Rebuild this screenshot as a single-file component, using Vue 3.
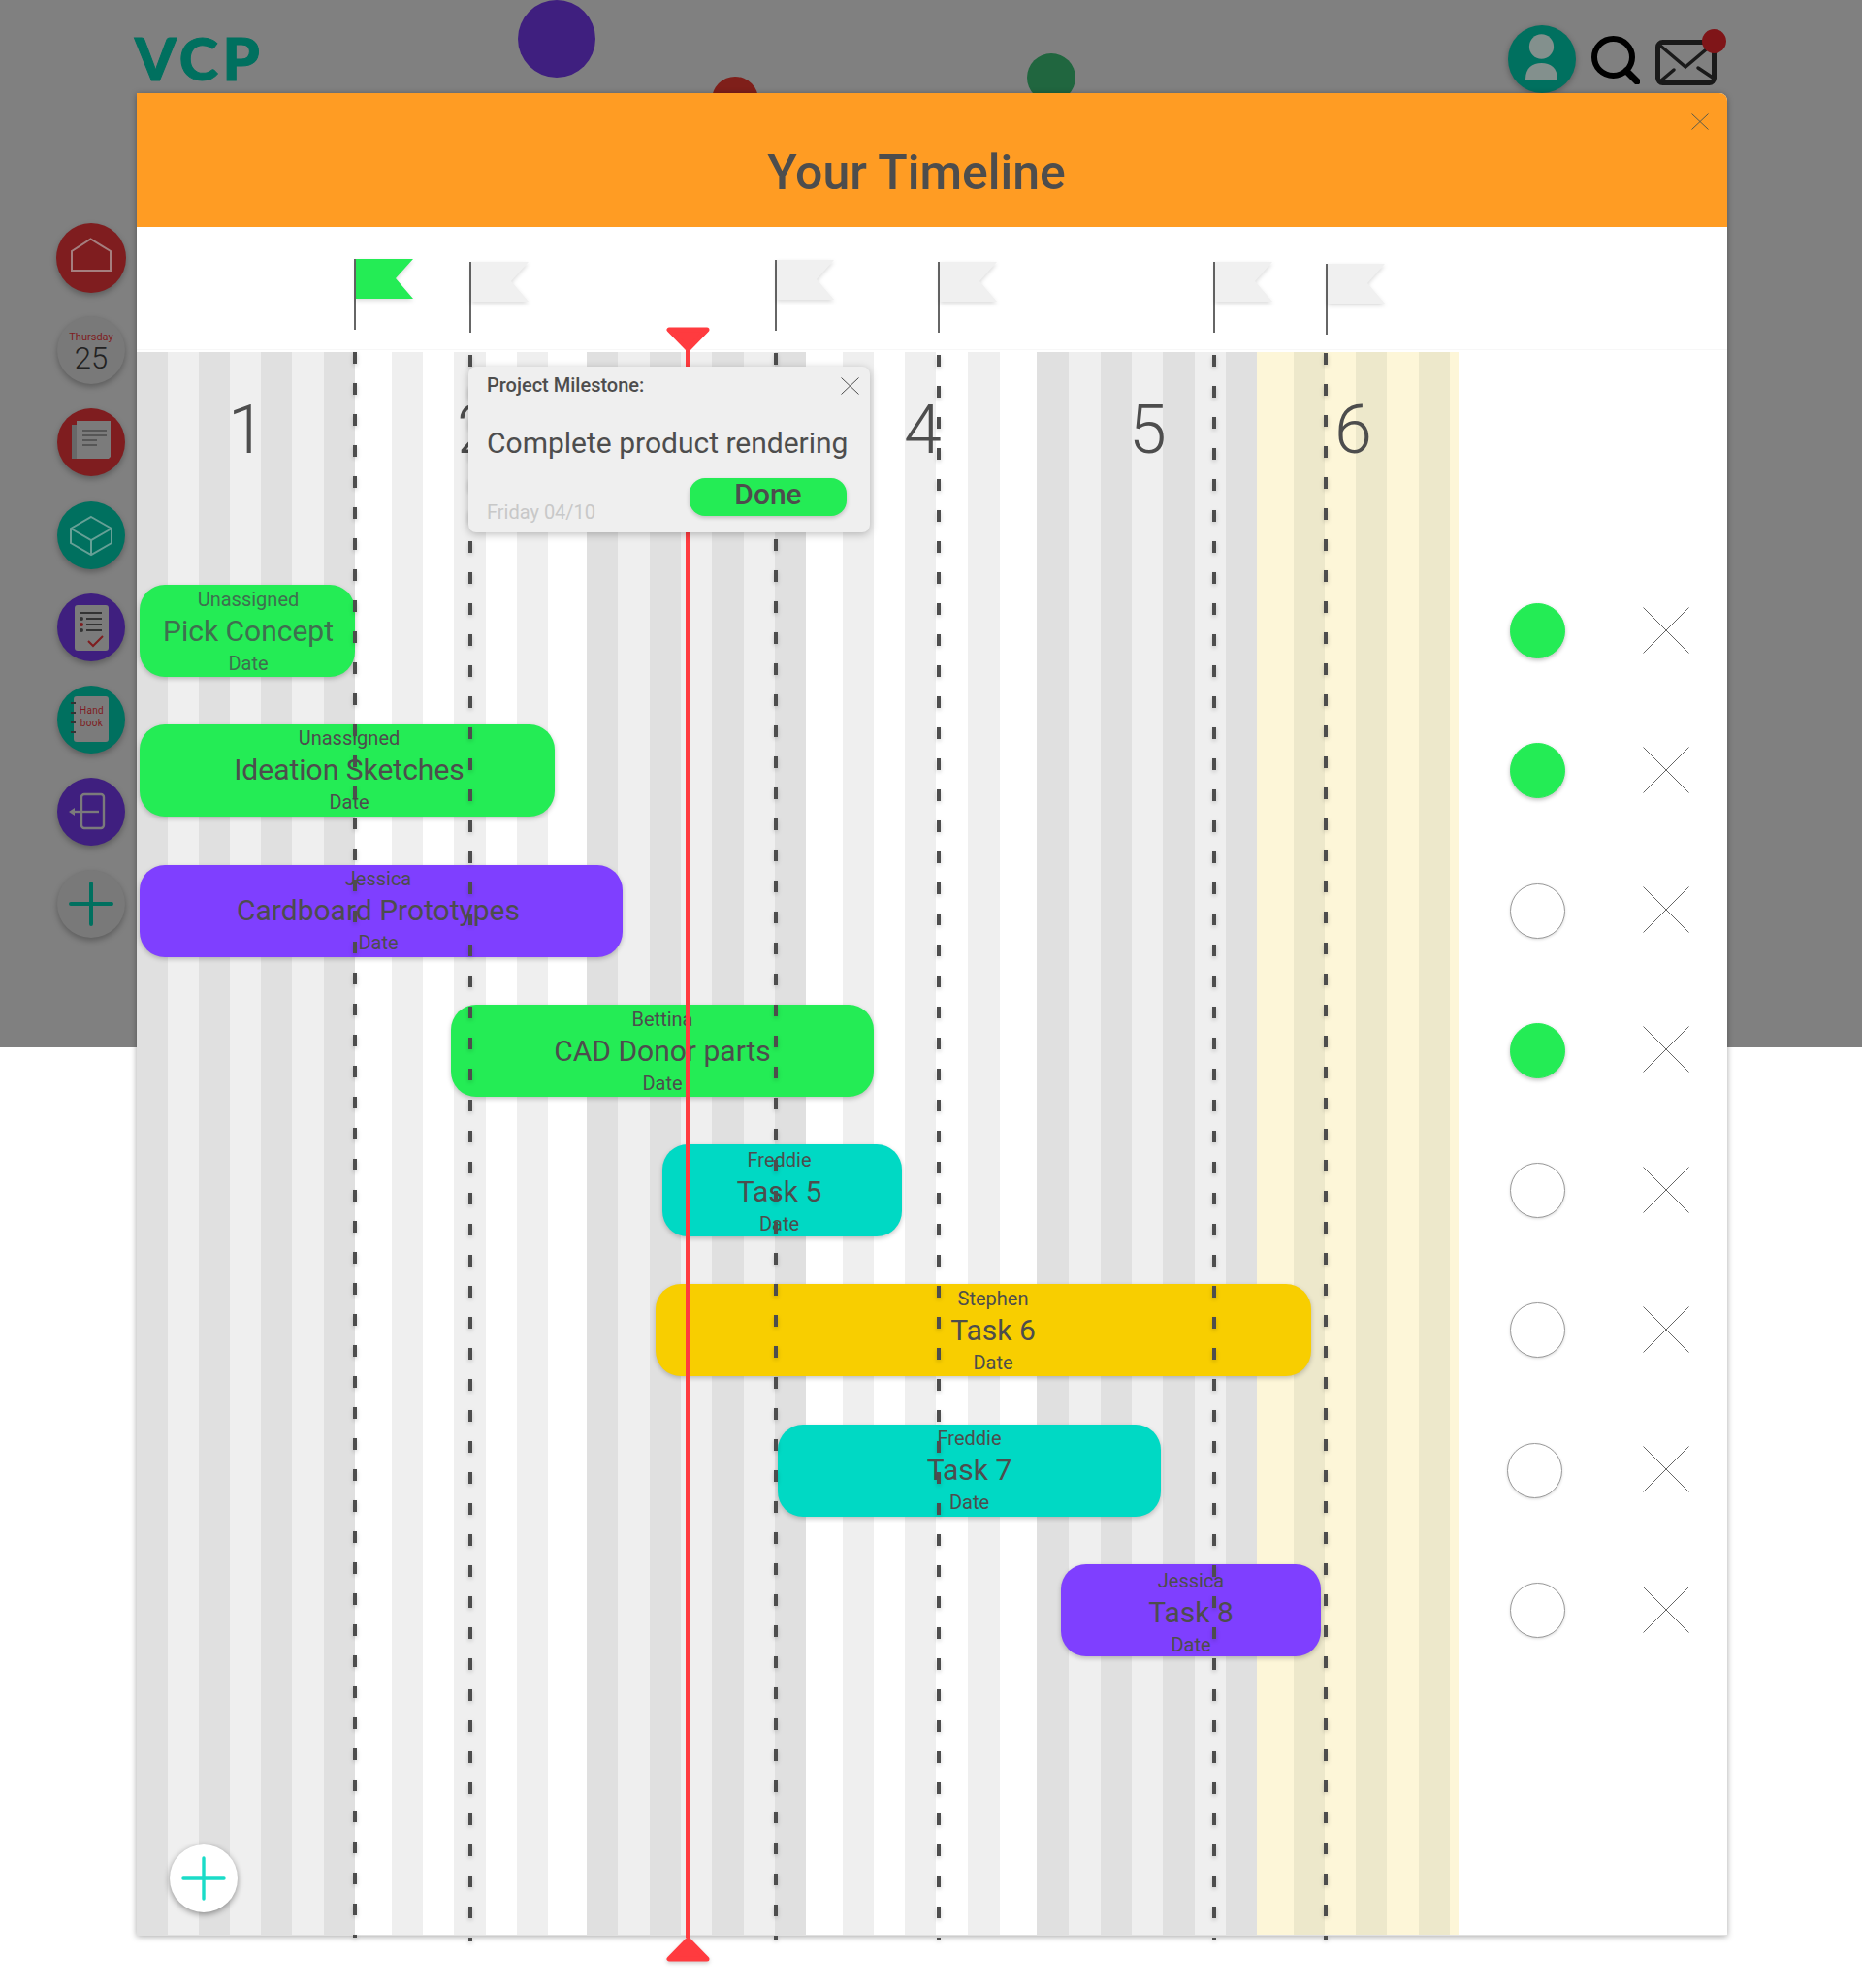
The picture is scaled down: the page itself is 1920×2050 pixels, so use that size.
<script setup>
const bounds = [
  [173,'d'],[205,'l'],[237,'d'],[269,'l'],[301,'d'],[334,'l'],[366,'d'],
  [404,'w'],[436,'l'],[468,'w'],[500.5,'l'],[533,'w'],[565,'l'],
  [604.5,'w'],[637,'d'],[670,'l'],[702,'d'],[734,'l'],[766.5,'d'],[799,'l'],[831,'d'],
  [869,'w'],[901,'l'],[933,'w'],[965,'l'],[998,'w'],[1030.5,'l'],
  [1069,'w'],[1102,'d'],[1135,'l'],[1167,'d'],[1199,'l'],[1231.5,'d'],[1264,'l'],[1296,'d'],
  [1334,'y'],[1366,'z'],[1398,'y'],[1430,'z'],[1463,'y'],[1495,'z'],[1504,'y']
]
const colors = { d:'#e0e0e0', l:'#efefef', w:'#ffffff', y:'#fdf6d8', z:'#ede8cb' }
let prev = 141
const stripes = bounds.map(([end, k]) => {
  const s = { width: end - prev, color: colors[k] }
  prev = end
  return s
})

const weeks = [
  { n: 1, left: 94 }, { n: 2, left: 330 }, { n: 3, left: 560 },
  { n: 4, left: 791 }, { n: 5, left: 1023 }, { n: 6, left: 1235 }
]

const flags = [
  { pole: 365.5, top: 267, on: true },
  { pole: 485, top: 270 },
  { pole: 800, top: 268 },
  { pole: 968, top: 270 },
  { pole: 1252, top: 270 },
  { pole: 1368, top: 272 }
]

const dashes = [
  { x: 366, top: 363, end: 1998 },
  { x: 485, top: 366, end: 2002 },
  { x: 800, top: 364, end: 2000 },
  { x: 968, top: 366, end: 2000 },
  { x: 1252, top: 366, end: 2000 },
  { x: 1367, top: 364, end: 2000 }
]

const tasks = [
  { who: 'Unassigned', name: 'Pick Concept', x: 144, end: 366, tone: 'green', shift: 1, dy: 1, done: true, soft: true },
  { who: 'Unassigned', name: 'Ideation Sketches', x: 144, end: 572, tone: 'green', shift: 2, dy: 0, done: true },
  { who: 'Jessica', name: 'Cardboard Prototypes', x: 144, end: 642, tone: 'purple', shift: -3, dy: 0, done: false },
  { who: 'Bettina', name: 'CAD Donor parts', x: 465, end: 901, tone: 'green', shift: 0, dy: 1, done: true },
  { who: 'Freddie', name: 'Task 5', x: 683, end: 930, tone: 'teal', shift: -3, dy: 2, done: false },
  { who: 'Stephen', name: 'Task 6', x: 676, end: 1352, tone: 'yellow', shift: 10, dy: 1, done: false },
  { who: 'Freddie', name: 'Task 7', x: 802, end: 1197, tone: 'teal', shift: 0, dy: 0, done: false, dot: -3 },
  { who: 'Jessica', name: 'Task 8', x: 1094, end: 1362, tone: 'purple', shift: 0, dy: 3, done: false }
]
</script>

<template>
  <div class="page">
    <div class="backdrop">
      <span class="blob blob-purple"></span>
      <span class="blob blob-red"></span>
      <span class="blob blob-green"></span>

      <header class="topbar">
        <div class="logo">VCP</div>
        <div class="top-icons">
          <div class="user">
            <svg width="70" height="70" viewBox="0 0 70 70">
              <ellipse cx="34.5" cy="22" rx="12.6" ry="12.7" fill="#83908d" />
              <path d="M18 56 C18 44 25 39 34.5 39 C44 39 51 44 51 56 Z" fill="#83908d" />
            </svg>
          </div>
          <svg class="search" width="50" height="50" viewBox="0 0 50 50">
            <ellipse cx="22.5" cy="22" rx="19.5" ry="19" fill="none" stroke="#000" stroke-width="6" />
            <path d="M36 36 L47 47" stroke="#000" stroke-width="7" stroke-linecap="round" />
          </svg>
          <div class="mail">
            <svg width="63" height="47" viewBox="0 0 63 47">
              <rect x="2.5" y="2.5" width="58" height="42" rx="5" fill="none" stroke="#1a1a1a" stroke-width="5" />
              <path d="M5 6 L31 28 L57 6" fill="none" stroke="#1a1a1a" stroke-width="3.5" />
              <path d="M6 42 L19 31 M44 29 L59 39" stroke="#1a1a1a" stroke-width="3.5" stroke-linecap="round" />
            </svg>
            <span class="mail-dot"></span>
          </div>
        </div>
      </header>

      <nav class="sidebar">
        <div class="nav nav-home red">
          <svg width="72" height="72" viewBox="0 0 72 72">
            <path d="M16 49 V29 L35.5 16.5 L56 29 V49 Z" fill="none" stroke="#a57f7f" stroke-width="2" />
          </svg>
        </div>
        <div class="nav grey cal">
          <span class="cal-day">Thursday</span>
          <span class="cal-num">25</span>
        </div>
        <div class="nav red">
          <svg width="70" height="70" viewBox="0 0 70 70">
            <rect x="15" y="17" width="10" height="35" fill="#686868" />
            <path d="M20 13 H55 V50 L53 52 H20 Z" fill="#7b7b7b" />
            <path d="M26 23 H51 M26 28 H51 M26 33 H41 M26 38 H41" stroke="#333" stroke-width="1" />
          </svg>
        </div>
        <div class="nav teal">
          <svg width="70" height="70" viewBox="0 0 70 70">
            <path d="M35 16 L56 28 V43 L35 55 L14 43 V28 Z M14 28 L35 40 L56 28 M35 40 V55" fill="none" stroke="#66a096" stroke-width="2" />
          </svg>
        </div>
        <div class="nav purple">
          <svg width="70" height="70" viewBox="0 0 70 70">
            <rect x="18" y="12" width="35" height="47" rx="3" fill="#7b7b7b" />
            <path d="M23 20 H46" stroke="#333" stroke-width="2" />
            <path d="M30 26 H46 M30 32 H46 M30 38 H46" stroke="#333" stroke-width="2" />
            <circle cx="25" cy="26" r="2" fill="#333" />
            <circle cx="25" cy="32" r="2" fill="#7f1d1f" />
            <circle cx="25" cy="38" r="2" fill="#333" />
            <path d="M32 49 L37 54 L47 44" fill="none" stroke="#7f1d1f" stroke-width="2" />
          </svg>
        </div>
        <div class="nav teal book">
          <div class="book-page">
            <span class="ring"></span><span class="ring"></span><span class="ring"></span><span class="ring"></span>
            <span class="book-text">Hand<br />book</span>
          </div>
        </div>
        <div class="nav purple">
          <svg width="70" height="70" viewBox="0 0 70 70">
            <rect x="25" y="17" width="23" height="35" rx="3" fill="none" stroke="#7b7b7b" stroke-width="2.4" />
            <path d="M43 35 H16" stroke="#7b7b7b" stroke-width="2.4" />
            <path d="M12 35 L18 31 V39 Z" fill="#7b7b7b" />
          </svg>
        </div>
        <div class="nav grey">
          <svg width="70" height="70" viewBox="0 0 70 70">
            <path d="M35 14 V56 M14 35 H56" stroke="#00705f" stroke-width="4" stroke-linecap="round" />
          </svg>
        </div>
      </nav>
    </div>

    <section class="modal">
      <div class="modal-head">
        <h1 class="title">Your Timeline</h1>
        <svg class="head-close" width="18" height="17" viewBox="0 0 18 17">
          <path d="M0.5 0.5 L17.5 16.5 M17.5 0.5 L0.5 16.5" stroke="#5a5a4a" stroke-width="1" />
        </svg>
      </div>

      <div class="flag-band">
        <svg
          v-for="(f, i) in flags"
          :key="i"
          class="flag"
          :style="{ left: f.pole - 142 + 'px', top: f.top - 234 + 'px' }"
          width="66"
          height="80"
          viewBox="0 0 66 80"
        >
          <rect x="0" y="0" width="2" height="73" fill="#666" />
          <polygon class="flag-cloth" points="2,0 61,0 43,20 61,41 2,41" :fill="f.on ? '#24ec55' : '#f0f0f0'" />
        </svg>
      </div>

      <div class="timeline">
        <div class="stripes">
          <span v-for="(s, i) in stripes" :key="i" class="stripe" :style="{ width: s.width + 'px', background: s.color }"></span>
        </div>

        <span v-for="w in weeks" :key="w.n" class="week" :style="{ left: w.left + 'px' }">{{ w.n }}</span>

        <div class="rows">
          <div v-for="t in tasks" :key="t.name" class="row">
            <div class="track">
              <div
                class="bar"
                :class="[t.tone, { soft: t.soft }]"
                :style="{ marginLeft: t.x - 141 + 'px', width: t.end - t.x + 'px' }"
              >
                <div class="bar-text" :style="{ transform: 'translate(' + t.shift + 'px,' + t.dy + 'px)' }">
                  <div class="bar-small">{{ t.who }}</div>
                  <div class="bar-name">{{ t.name }}</div>
                  <div class="bar-small">Date</div>
                </div>
              </div>
            </div>
            <span class="status" :class="{ done: t.done }" :style="{ marginLeft: 17 + (t.dot || 0) + 'px' }"></span>
            <svg class="remove" :style="{ marginLeft: 80 - (t.dot || 0) + 'px' }" width="48" height="48" viewBox="0 0 48 48">
              <path d="M0.5 0.5 L47.5 47.5 M47.5 0.5 L0.5 47.5" stroke="#666" stroke-width="1" />
            </svg>
          </div>
        </div>

        <button class="fab" type="button">
          <svg width="46" height="46" viewBox="0 0 46 46">
            <path d="M23 2 V44 M2 23 H44" stroke="#1adcc8" stroke-width="3.4" stroke-linecap="round" />
          </svg>
        </button>
      </div>

      <span
        v-for="(d, i) in dashes"
        :key="i"
        class="dash"
        :style="{ left: d.x - 143 + 'px', top: d.top - 96 + 'px', height: d.end - d.top + 'px' }"
      ></span>

      <div class="now-line"></div>
      <svg class="now-top" width="45" height="26" viewBox="0 0 45 26">
        <polygon points="3,3 42,3 22.5,23" fill="#ff3b3f" stroke="#ff3b3f" stroke-width="5" stroke-linejoin="round" />
      </svg>
      <svg class="now-bottom" width="45" height="26" viewBox="0 0 45 26">
        <polygon points="3,23 42,23 22.5,3" fill="#ff3b3f" stroke="#ff3b3f" stroke-width="5" stroke-linejoin="round" />
      </svg>

      <aside class="popup">
        <div class="pop-head">
          <span class="pop-label">Project Milestone:</span>
          <svg width="19" height="18" viewBox="0 0 19 18">
            <path d="M0.5 0.5 L18.5 17.5 M18.5 0.5 L0.5 17.5" stroke="#4d4d4d" stroke-width="1" />
          </svg>
        </div>
        <div class="pop-text">Complete product rendering</div>
        <div class="pop-foot">
          <span class="pop-date">Friday 04/10</span>
          <button class="pop-done" type="button">Done</button>
        </div>
      </aside>
    </section>
  </div>
</template>

<style>
html, body { margin: 0; background: #fff; }
</style>

<style scoped>
.page {
  position: relative;
  width: 1920px;
  height: 2050px;
  overflow: hidden;
  background: #fff;
  font-family: Roboto, "Liberation Sans", sans-serif;
  color: #4d4d4d;
}
.backdrop {
  position: relative;
  height: 1080px;
  background: #808080;
}
.blob { position: absolute; border-radius: 50%; }
.blob-purple { left: 534px; top: 0; width: 80px; height: 80px; background: #3f1f7f; }
.blob-red { left: 734px; top: 79px; width: 48px; height: 48px; background: #7f1f1a; }
.blob-green { left: 1059px; top: 55px; width: 50px; height: 50px; background: #20663f; }

.topbar {
  position: relative;
  display: flex;
  justify-content: space-between;
  align-items: flex-start;
  height: 96px;
  padding: 0 150px 0 139px;
}
.logo {
  margin-top: 26px;
  font-family: Lato, sans-serif;
  font-weight: 900;
  font-size: 61px;
  line-height: 68px;
  letter-spacing: 4.5px;
  color: #00705f;
  -webkit-text-stroke: 1px #00705f;
}
.top-icons { display: flex; align-items: flex-start; }
.user {
  width: 70px;
  height: 70px;
  margin-top: 26px;
  border-radius: 50%;
  background: #00705f;
  box-shadow: 0 2px 6px rgba(0, 0, 0, 0.3);
}
.user svg, .nav svg { display: block; }
.search { margin: 37px 0 0 16px; }
.mail { position: relative; width: 63px; height: 47px; margin: 41px 0 0 16px; }
.mail svg { display: block; }
.mail-dot {
  position: absolute;
  left: 48px;
  top: -11px;
  width: 25px;
  height: 25px;
  border-radius: 50%;
  background: #7f1518;
}

.sidebar {
  position: relative;
  display: flex;
  flex-direction: column;
  align-items: center;
  gap: 25.2px;
  width: 72px;
  margin-left: 58px;
  padding-top: 134px;
}
.nav {
  width: 70px;
  height: 70px;
  border-radius: 50%;
  box-shadow: 0 3px 6px rgba(0, 0, 0, 0.28);
}
.nav-home { width: 72px; height: 72px; margin-bottom: -1px; }
.red { background: #7f1d1f; }
.teal { background: #00705f; }
.purple { background: #3f1f7f; }
.grey { background: #797979; }
.cal {
  display: flex;
  flex-direction: column;
  align-items: center;
}
.cal-day {
  margin-top: 15px;
  font-size: 11px;
  line-height: 14px;
  color: #7f1d1f;
}
.cal-num {
  font-size: 31px;
  line-height: 30px;
  font-weight: 300;
  color: #222;
}
.book { display: flex; justify-content: center; align-items: center; }
.book-page {
  position: relative;
  display: flex;
  flex-direction: column;
  gap: 8px;
  width: 36px;
  height: 47px;
  padding-top: 6px;
  box-sizing: border-box;
  border-radius: 3px;
  background: #7b7b7b;
}
.ring {
  display: block;
  flex: none;
  width: 5px;
  height: 2px;
  margin-left: -3px;
  background: #333;
}
.book-text {
  position: absolute;
  inset: 8px 0 0 1px;
  text-align: center;
  font-size: 10px;
  line-height: 13px;
  letter-spacing: 0.3px;
  color: #7f1d1f;
}

.modal {
  position: absolute;
  left: 141px;
  top: 96px;
  width: 1640px;
  height: 1900px;
  display: flex;
  flex-direction: column;
  background: #fff;
  border-radius: 0 8px 0 0;
  box-shadow: 0 1px 6px rgba(0, 0, 0, 0.35);
}
.modal-head {
  position: relative;
  flex: none;
  height: 138px;
  display: flex;
  justify-content: center;
  padding: 0 32px 0 0;
  box-sizing: border-box;
  background: #ff9c23;
  border-radius: 0 8px 0 0;
}
.title {
  margin: 53px 0 0;
  font-size: 50px;
  line-height: 58px;
  font-weight: 500;
  color: #4d4d4d;
}
.head-close { position: absolute; right: 19px; top: 21px; }
.flag-band {
  position: relative;
  flex: none;
  height: 126px;
  border-bottom: 1px solid #f7f7f7;
  margin-bottom: 2px;
}
.flag { position: absolute; overflow: visible; }
.flag-cloth { filter: drop-shadow(0 2px 2px rgba(0, 0, 0, 0.14)); }

.timeline {
  position: relative;
  flex: 1;
  padding-top: 240px;
  box-sizing: border-box;
}
.stripes {
  position: absolute;
  inset: 0 0 0 0;
  display: flex;
  overflow: hidden;
  border-bottom: 1px solid rgba(0, 0, 0, 0.12);
}
.stripe { flex: none; height: 100%; }
.week {
  position: absolute;
  top: 38px;
  font-size: 70px;
  line-height: 84px;
  font-weight: 300;
  color: #4d4d4d;
}
.rows {
  position: relative;
  display: flex;
  flex-direction: column;
  gap: 49.3px;
}
.row { display: flex; align-items: center; height: 95px; }
.track { flex: none; width: 1399px; }
.bar {
  height: 95px;
  display: flex;
  justify-content: center;
  border-radius: 26px;
  box-shadow: 0 2px 5px rgba(0, 0, 0, 0.22);
}
.bar.green { background: #24ec55; }
.bar.purple { background: #7f3fff; }
.bar.teal { background: #00d9c4; }
.bar.yellow { background: #f8ce00; }
.bar.soft { color: #3f6f4f; }
.bar-text { text-align: center; white-space: nowrap; }
.bar-small { font-size: 20px; line-height: 28px; }
.bar-name { font-size: 30px; line-height: 38px; }
.status {
  flex: none;
  width: 57px;
  height: 57px;
  box-sizing: border-box;
  border-radius: 50%;
  border: 1px solid #999;
  background: #fff;
  box-shadow: 0 1px 3px rgba(0, 0, 0, 0.15);
}
.status.done { background: #24ec55; border-color: #24ec55; box-shadow: 0 2px 4px rgba(0, 0, 0, 0.25); }
.remove { flex: none; margin-top: -2px; }
.fab {
  position: absolute;
  left: 34px;
  top: 1539px;
  width: 70px;
  height: 70px;
  padding: 0;
  border: 0;
  border-radius: 50%;
  background: #fff;
  display: flex;
  align-items: center;
  justify-content: center;
  box-shadow: 0 2px 6px rgba(0, 0, 0, 0.4);
}
.dash {
  position: absolute;
  width: 4px;
  background: repeating-linear-gradient(to bottom, #4d4d4d 0, #4d4d4d 12px, transparent 12px, transparent 32px);
  filter: drop-shadow(0 2px 2px rgba(0, 0, 0, 0.18));
}
.now-line {
  position: absolute;
  left: 566px;
  top: 262px;
  width: 4px;
  height: 1640px;
  background: #ff3b3f;
}
.now-top { position: absolute; left: 546px; top: 241px; }
.now-bottom {
  position: absolute;
  left: 546px;
  top: 1901px;
  filter: drop-shadow(0 2px 2px rgba(0, 0, 0, 0.2));
}
.popup {
  position: absolute;
  left: 342px;
  top: 282px;
  width: 414px;
  height: 171px;
  padding: 0 11px 0 19px;
  box-sizing: border-box;
  display: flex;
  flex-direction: column;
  background: #efefef;
  border-radius: 8px;
  box-shadow: 0 2px 8px rgba(0, 0, 0, 0.25);
}
.pop-head {
  display: flex;
  justify-content: space-between;
  align-items: center;
  height: 38px;
  padding-top: 2px;
  box-sizing: border-box;
}
.pop-label { font-size: 20px; line-height: 24px; font-weight: 500; color: #4d4d4d; margin-top: -2px; }
.pop-text { margin-top: 23px; font-size: 30px; line-height: 36px; color: #4d4d4d; white-space: nowrap; }
.pop-foot { display: flex; justify-content: space-between; align-items: flex-start; margin-top: 18px; padding-right: 13px; }
.pop-date { margin-top: 21px; font-size: 20px; line-height: 28px; color: #c8c8c8; }
.pop-done {
  width: 162px;
  height: 39px;
  padding: 0 0 5px;
  border: 0;
  border-radius: 16px;
  background: #24ec55;
  font-family: Roboto, sans-serif;
  font-size: 30px;
  line-height: 34px;
  font-weight: 500;
  color: #4d4d4d;
  box-shadow: 0 2px 4px rgba(0, 0, 0, 0.2);
}
</style>
